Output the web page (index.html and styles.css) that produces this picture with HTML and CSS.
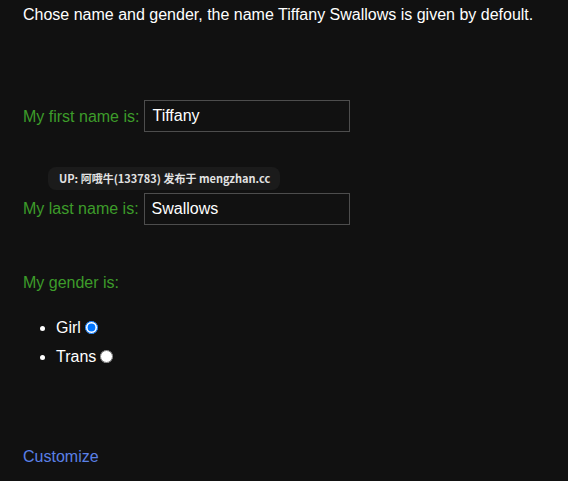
FILE: index.html
```html
<!DOCTYPE html>
<html>
<head>
<meta charset="utf-8">
<link rel="stylesheet" href="styles.css">
</head>
<body>
<div class="story">
  <p class="intro">Chose name and gender, the name Tiffany Swallows is given by defoult.</p>
  <div class="field first">
    <span class="label">My first name is:</span>
    <input class="textbox" type="text" value="Tiffany">
  </div>
  <div class="field second">
    <span class="label">My last name is:</span>
    <input class="textbox" type="text" value="Swallows">
  </div>
  <p class="label gender">My gender is:</p>
  <ul class="choices">
    <li>Girl<input class="radio" type="radio" name="g" checked></li>
    <li>Trans<input class="radio" type="radio" name="g"></li>
  </ul>
  <a class="link" href="#">Customize</a>
  <div class="tip">UP: 阿哦牛(133783) 发布于 mengzhan.cc</div>
</div>
</body>
</html>
```
FILE: styles.css
```css
html, body {
  margin: 0;
  padding: 0;
  background: #111111;
}
body {
  font-family: "Liberation Sans", Arial, sans-serif;
  font-size: 16px;
  line-height: 18px;
  color: #ffffff;
  height: 481px;
  overflow: hidden;
}
.story {
  position: relative;
  padding: 6px 0 0 23px;
}
.intro {
  margin: 0;
}
.field {
  display: flex;
  align-items: center;
  gap: 5px;
}
.first {
  margin-top: 76px;
}
.second {
  margin-top: 61px;
}
.label {
  color: #3d9c2a;
}
.textbox {
  box-sizing: border-box;
  width: 206px;
  height: 32px;
  margin: 0;
  padding: 0 7px;
  background: #111111;
  border: 1px solid #4d4d4d;
  color: #ffffff;
  font-family: "Liberation Sans", Arial, sans-serif;
  font-size: 16px;
  outline: none;
}
.first .label {
  margin-top: 1px;
}
.gender {
  margin: 49px 0 0;
}
.choices {
  margin: 21px 0 0;
  padding-left: 33px;
}
.choices li {
  height: 29px;
  line-height: 29px;
}
.radio {
  margin: 0 0 0 4px;
  width: 13px;
  height: 13px;
  vertical-align: -1px;
}
.link {
  display: inline-block;
  margin-top: 77px;
  color: #5a80e6;
  text-decoration: none;
}
.tip {
  position: absolute;
  left: 48px;
  top: 167px;
  padding: 0 10px 0 11px;
  height: 23px;
  line-height: 23px;
  background: #1b1b1b;
  border-radius: 8px;
  color: #e2e2e2;
  font-family: "Noto Sans CJK SC", "Noto Sans", sans-serif;
  font-weight: bold;
  font-size: 11px;
}
```
